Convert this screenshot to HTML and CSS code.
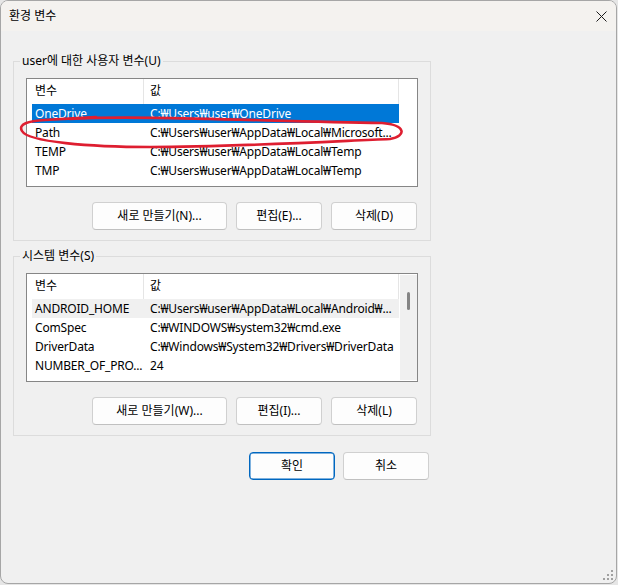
FILE: index.html
```html
<!DOCTYPE html>
<html lang="ko">
<head>
<meta charset="utf-8">
<title>환경 변수</title>
<link rel="stylesheet" href="styles.css">
</head>
<body>
<div class="window">
  <div class="titlebar">
    <span class="title">환경 변수</span>
    <svg class="close" width="11" height="11" viewBox="0 0 11 11" aria-hidden="true">
      <path d="M0.5 0.5 L10.5 10.5 M10.5 0.5 L0.5 10.5" stroke="#1b1b1b" stroke-width="1" fill="none"/>
    </svg>
  </div>
  <div class="content">
    <fieldset class="group">
      <legend>user에 대한 사용자 변수(U)</legend>
      <div class="list">
        <div class="list-body">
          <div class="row header"><div class="c1">변수</div><div class="c2">값</div></div>
          <div class="row selected"><div class="c1">OneDrive</div><div class="c2">C:₩Users₩user₩OneDrive</div></div>
          <div class="row"><div class="c1">Path</div><div class="c2">C:₩Users₩user₩AppData₩Local₩Microsoft...</div></div>
          <div class="row"><div class="c1">TEMP</div><div class="c2">C:₩Users₩user₩AppData₩Local₩Temp</div></div>
          <div class="row"><div class="c1">TMP</div><div class="c2">C:₩Users₩user₩AppData₩Local₩Temp</div></div>
        </div>
        <div class="vspace"></div>
      </div>
      <div class="buttons">
        <button class="btn wide">새로 만들기(N)...</button>
        <button class="btn">편집(E)...</button>
        <button class="btn">삭제(D)</button>
      </div>
    </fieldset>
    <fieldset class="group second">
      <legend>시스템 변수(S)</legend>
      <div class="list">
        <div class="list-body">
          <div class="row header"><div class="c1">변수</div><div class="c2">값</div></div>
          <div class="row hover"><div class="c1">ANDROID_HOME</div><div class="c2">C:₩Users₩user₩AppData₩Local₩Android₩...</div></div>
          <div class="row"><div class="c1">ComSpec</div><div class="c2">C:₩WINDOWS₩system32₩cmd.exe</div></div>
          <div class="row"><div class="c1">DriverData</div><div class="c2">C:₩Windows₩System32₩Drivers₩DriverData</div></div>
          <div class="row"><div class="c1">NUMBER_OF_PRO...</div><div class="c2">24</div></div>
        </div>
        <div class="vscroll"><div class="thumb"></div></div>
      </div>
      <div class="buttons">
        <button class="btn wide">새로 만들기(W)...</button>
        <button class="btn">편집(I)...</button>
        <button class="btn">삭제(L)</button>
      </div>
    </fieldset>
    <div class="dialog-buttons">
      <button class="btn default">확인</button>
      <button class="btn">취소</button>
    </div>
  </div>
  <svg class="grip" width="12" height="12" viewBox="0 0 12 12" aria-hidden="true">
    <rect x="9" y="1" width="2" height="2" fill="#a0a0a0"/>
    <rect x="5" y="5" width="2" height="2" fill="#a0a0a0"/>
    <rect x="9" y="5" width="2" height="2" fill="#a0a0a0"/>
    <rect x="1" y="9" width="2" height="2" fill="#a0a0a0"/>
    <rect x="5" y="9" width="2" height="2" fill="#a0a0a0"/>
    <rect x="9" y="9" width="2" height="2" fill="#a0a0a0"/>
  </svg>
  <svg class="annotation" width="617" height="584" viewBox="0 0 617 584" aria-hidden="true">
    <path d="M70 119 C 130 115, 260 121, 382 123 C 406 125, 407 136, 390 139 C 320 142, 230 147, 150 147 C 90 147, 28 142, 22 131 C 18 124, 28 121, 45 120 C 60 119, 80 118, 96 117"
      stroke="#de1e30" stroke-width="2.6" fill="none" stroke-linecap="round" stroke-linejoin="round"/>
  </svg>
</div>
</body>
</html>
```
FILE: styles.css
```css
* {
  box-sizing: border-box;
}

html, body {
  margin: 0;
  padding: 0;
}

body {
  width: 618px;
  height: 585px;
  background: #e6e6e6;
  font-family: "Noto Sans", "Noto Sans CJK KR", sans-serif;
  font-size: 12px;
  color: #000;
}

.window {
  position: relative;
  width: 617px;
  height: 584px;
  border: 1px solid #a6a6a6;
  border-radius: 8px;
  background: #f0f0f0;
  overflow: hidden;
}

.titlebar {
  height: 30px;
  background: #f4f2ef;
  display: flex;
  align-items: center;
  justify-content: space-between;
  padding: 0 9px 0 8px;
}

.title {
  font-size: 12px;
  line-height: 16px;
}

.content {
  padding: 22px 0 0 12px;
  width: 430px;
}

.group {
  margin: 0;
  width: 418px;
  border: 1px solid #dcdcdc;
  padding: 9px 12px 10px 12px;
}

.group.second {
  margin-top: 7px;
}

.group legend {
  font-size: 12px;
  line-height: 16px;
  padding: 0 2px;
  margin-left: -6px;
}

.list {
  display: flex;
  height: 109px;
  border: 1px solid #868686;
  background: #fff;
  overflow: hidden;
}

.list-body {
  width: 372px;
  padding-left: 5px;
}

.row {
  display: flex;
  height: 19px;
  line-height: 19px;
  white-space: nowrap;
  letter-spacing: -0.18px;
}

.row .c1 {
  width: 112px;
  padding-left: 3px;
  overflow: hidden;
}

.row .c2 {
  flex: 1;
  padding-left: 6px;
  overflow: hidden;
}

.row.header {
  height: 25px;
  line-height: 23px;
  letter-spacing: 0;
}

.row.header .c1 {
  border-right: 1px solid #e5e5e5;
}

.row.header .c2 {
  border-right: 1px solid #e5e5e5;
}

.row.selected {
  background: #0078d7;
  color: #fff;
}

.row.hover {
  background: #f0f0f0;
}

.vspace {
  flex: 1;
}

.vscroll {
  flex: 1;
  background: #f0f0f0;
  border: 1px solid #fff;
  border-right-width: 0;
  display: flex;
  justify-content: center;
  padding-top: 17px;
}

.thumb {
  width: 3px;
  height: 18px;
  border-radius: 1.5px;
  background: #858585;
}

.buttons {
  display: flex;
  justify-content: flex-end;
  gap: 9px;
  margin-top: 15px;
  padding-right: 1px;
}

.btn {
  height: 28px;
  width: 86px;
  padding: 0;
  border: 1px solid #d0d0d0;
  border-bottom-color: #c0c0c0;
  border-radius: 4px;
  background: #fdfdfd;
  font-family: "Noto Sans", "Noto Sans CJK KR", sans-serif;
  font-size: 12px;
  color: #000;
  line-height: 16px;
}

.btn.wide {
  width: 135px;
}

.btn.default {
  border: 1px solid #0067c0;
  box-shadow: inset 0 0 0 0.5px #0067c0;
}

.dialog-buttons {
  display: flex;
  justify-content: flex-end;
  gap: 8px;
  margin-top: 16px;
  padding-right: 2px;
  width: 418px;
}

.grip {
  position: absolute;
  right: 2px;
  bottom: 2px;
}

.annotation {
  position: absolute;
  left: -1px;
  top: -1px;
  pointer-events: none;
}
```
